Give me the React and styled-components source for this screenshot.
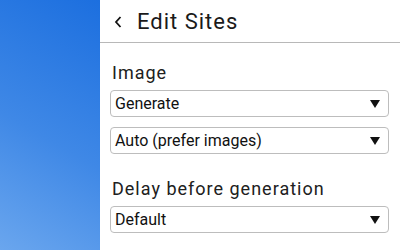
import React from 'react'
import styled, { createGlobalStyle } from 'styled-components'

const Global = createGlobalStyle`
  html, body { margin: 0; padding: 0; }
  body {
    width: 400px;
    height: 250px;
    overflow: hidden;
    font-family: Roboto, "Liberation Sans", sans-serif;
  }
`

const Screen = styled.div`
  display: flex;
  width: 400px;
  height: 250px;
`

const Backdrop = styled.div`
  flex: 0 0 100px;
  background: linear-gradient(210deg, #1c6fdf 0%, #3f88e6 55%, #6aa6ee 100%);
`

const Panel = styled.div`
  flex: 1;
  background: #fff;
  display: flex;
  flex-direction: column;
`

const Header = styled.div`
  height: 43px;
  box-sizing: border-box;
  border-bottom: 1px solid #b8b8b8;
  display: flex;
  align-items: center;
  padding: 1px 0 0 14px;
  gap: 16px;
`

const Title = styled.h1`
  margin: 0 0 0 -1px;
  font-size: 22px;
  font-weight: 400;
  letter-spacing: 1px;
  color: #1a1a1a;
`

const Body = styled.div`
  padding: 19px 11px 0 10px;
  display: flex;
  flex-direction: column;
`

const Label = styled.div`
  font-size: 18px;
  line-height: 21px;
  letter-spacing: 1px;
  color: #202020;
  margin: ${({first}) => first ? '0' : '24px'} 0 7px 2px;
`

const Select = styled.div`
  height: 27px;
  box-sizing: border-box;
  border: 1px solid #bdbdbd;
  border-radius: 4px;
  display: flex;
  align-items: center;
  justify-content: space-between;
  padding: 0 8px 0 4px;
  font-size: 16px;
  color: #111;
  margin-bottom: ${({gap}) => gap || 0}px;
`

const Arrow = styled.svg`
  width: 10px;
  height: 8px;
`

const Back = () => (
  <svg width="8" height="12" viewBox="0 0 8 12">
    <path d="M6.5 1 L2 6 L6.5 11" fill="none" stroke="#111" strokeWidth="1.8" />
  </svg>
)

const Dropdown = ({children, gap}) => (
  <Select gap={gap}>
    <span>{children}</span>
    <Arrow viewBox="0 0 10 8"><path d="M0 0 H10 L5 8 Z" fill="#111" /></Arrow>
  </Select>
)

export default function App() {
  return (
    <Screen>
      <Global />
      <Backdrop />
      <Panel>
        <Header>
          <Back />
          <Title>Edit Sites</Title>
        </Header>
        <Body>
          <Label first>Image</Label>
          <Dropdown gap={10}>Generate</Dropdown>
          <Dropdown>Auto (prefer images)</Dropdown>
          <Label>Delay before generation</Label>
          <Dropdown>Default</Dropdown>
        </Body>
      </Panel>
    </Screen>
  )
}
